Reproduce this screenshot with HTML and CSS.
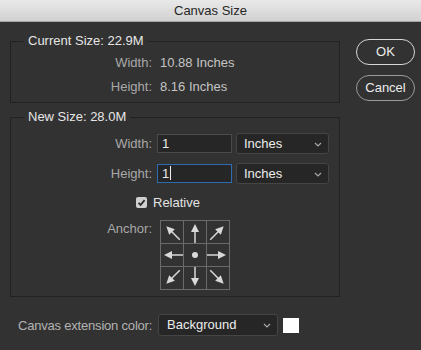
FILE: index.html
```html
<!DOCTYPE html>
<html lang="en">
<head>
    <meta charset="UTF-8">
    <title>Canvas Size</title>
    <link rel="stylesheet" href="styles.css">
</head>
<body>
<div id="dialog">
    <div class="titlebar">Canvas Size</div>
    <div class="content">
        <div class="main">
            <fieldset class="group current">
                <legend>Current Size: 22.9M</legend>
                <div class="info-row"><span class="label">Width:</span><span class="value">10.88 Inches</span></div>
                <div class="info-row"><span class="label">Height:</span><span class="value">8.16 Inches</span></div>
            </fieldset>

            <fieldset class="group new">
                <legend>New Size: 28.0M</legend>
                <div class="field-row">
                    <span class="label">Width:</span>
                    <div class="fields">
                        <div class="textbox">1</div>
                        <div class="select unit">Inches<svg class="chev" width="8" height="5" viewBox="0 0 8 5"><polyline points="1,1 4,4 7,1" fill="none" stroke="#a8a8a8" stroke-width="1.2"/></svg></div>
                    </div>
                </div>
                <div class="field-row">
                    <span class="label">Height:</span>
                    <div class="fields">
                        <div class="textbox focused">1<span class="caret"></span></div>
                        <div class="select unit">Inches<svg class="chev" width="8" height="5" viewBox="0 0 8 5"><polyline points="1,1 4,4 7,1" fill="none" stroke="#a8a8a8" stroke-width="1.2"/></svg></div>
                    </div>
                </div>
                <div class="check-row">
                    <span class="checkbox"><svg width="11" height="11" viewBox="0 0 11 11"><polyline points="2.5,5.8 4.6,7.9 8.6,3.2" fill="none" stroke="#2b2b2b" stroke-width="1.8"/></svg></span>
                    <span class="check-label">Relative</span>
                </div>
                <div class="anchor-row">
                    <span class="label">Anchor:</span>
                    <div class="anchor">
                        <div class="cell"><svg viewBox="0 0 22 22"><g transform="rotate(-45 11 11)"><line x1="11" y1="22" x2="11" y2="9"/><polygon points="11,3 7,11 15,11"/></g></svg></div>
                        <div class="cell"><svg viewBox="0 0 22 22"><line x1="11" y1="22" x2="11" y2="9"/><polygon points="11,3 7,11 15,11"/></svg></div>
                        <div class="cell"><svg viewBox="0 0 22 22"><g transform="rotate(45 11 11)"><line x1="11" y1="22" x2="11" y2="9"/><polygon points="11,3 7,11 15,11"/></g></svg></div>
                        <div class="cell"><svg viewBox="0 0 22 22"><g transform="rotate(-90 11 11)"><line x1="11" y1="22" x2="11" y2="9"/><polygon points="11,3 7,11 15,11"/></g></svg></div>
                        <div class="cell"><svg viewBox="0 0 22 22"><circle cx="11" cy="11" r="3"/></svg></div>
                        <div class="cell"><svg viewBox="0 0 22 22"><g transform="rotate(90 11 11)"><line x1="11" y1="22" x2="11" y2="9"/><polygon points="11,3 7,11 15,11"/></g></svg></div>
                        <div class="cell"><svg viewBox="0 0 22 22"><g transform="rotate(-135 11 11)"><line x1="11" y1="22" x2="11" y2="9"/><polygon points="11,3 7,11 15,11"/></g></svg></div>
                        <div class="cell"><svg viewBox="0 0 22 22"><g transform="rotate(180 11 11)"><line x1="11" y1="22" x2="11" y2="9"/><polygon points="11,3 7,11 15,11"/></g></svg></div>
                        <div class="cell"><svg viewBox="0 0 22 22"><g transform="rotate(135 11 11)"><line x1="11" y1="22" x2="11" y2="9"/><polygon points="11,3 7,11 15,11"/></g></svg></div>
                    </div>
                </div>
            </fieldset>

            <div class="ext-row">
                <span class="ext-label">Canvas extension color:</span>
                <div class="select ext">Background<svg class="chev" width="8" height="5" viewBox="0 0 8 5"><polyline points="1,1 4,4 7,1" fill="none" stroke="#a8a8a8" stroke-width="1.2"/></svg></div>
                <span class="swatch"></span>
            </div>
        </div>

        <div class="buttons">
            <div class="btn default">OK</div>
            <div class="btn">Cancel</div>
        </div>
    </div>
</div>
</body>
</html>
```

FILE: styles.css
```css
* {
    margin: 0;
    padding: 0;
    box-sizing: border-box;
}
html, body {
    height: 100%;
}
body {
    background-color: #323232;
    font-family: "Liberation Sans", Arial, sans-serif;
    font-size: 13px;
    color: #e4e4e4;
}
#dialog {
    width: 421px;
    height: 350px;
}
.titlebar {
    height: 22px;
    line-height: 21px;
    text-align: center;
    color: #262626;
    background: linear-gradient(#e9e9e9, #d1d1d1);
    border-bottom: 1px solid #a4a4a4;
}
.content {
    display: flex;
    padding-left: 10px;
}
.main {
    width: 330px;
    padding-top: 11px;
}

/* groups */
.group {
    border: 1px solid #222;
    min-width: 0;
}
.group legend {
    margin-left: 13px;
    padding: 0 4px;
    line-height: 16px;
    color: #e6e6e6;
}
.current {
    padding: 2px 0 3px;
}
.new {
    margin-top: 6px;
    padding: 7px 0 6px;
}
.label {
    text-align: right;
    color: #a9a9a9;
}
.info-row {
    display: grid;
    grid-template-columns: 141px auto;
    column-gap: 8px;
    line-height: 24px;
}
.info-row .value {
    color: #c4c4c4;
}

/* new size rows */
.field-row {
    display: grid;
    grid-template-columns: 141px auto;
    column-gap: 5px;
    align-items: center;
    height: 22px;
}
.field-row + .field-row {
    margin-top: 8px;
}
.fields {
    display: flex;
    align-items: center;
    gap: 4px;
}
.textbox {
    width: 75px;
    height: 19px;
    line-height: 17px;
    padding-left: 4px;
    background-color: #262626;
    border: 1px solid #4a4a4a;
    color: #ececec;
    display: flex;
    align-items: center;
}
.textbox.focused {
    border-color: #2d6cb0;
}
.caret {
    width: 1px;
    height: 14px;
    margin-left: 1px;
    background-color: #f0f0f0;
}
.select {
    position: relative;
    height: 21px;
    line-height: 19px;
    padding-left: 7px;
    background-color: #262626;
    border: 1px solid #454545;
    border-radius: 3px;
    color: #ececec;
}
.select .chev {
    position: absolute;
    right: 6px;
    top: 8px;
}
.unit {
    width: 93px;
}

.check-row {
    display: flex;
    align-items: center;
    gap: 6px;
    height: 16px;
    margin-top: 10px;
    padding-left: 125px;
}
.checkbox {
    width: 11px;
    height: 11px;
    border-radius: 2px;
    background-color: #cfcfcf;
    display: flex;
}
.check-label {
    color: #e4e4e4;
}

/* anchor */
.anchor-row {
    display: grid;
    grid-template-columns: 141px auto;
    column-gap: 8px;
    margin-top: 10px;
    line-height: 18px;
}
.anchor {
    display: grid;
    grid-template-columns: repeat(3, 22px);
    grid-template-rows: repeat(3, 22px);
    gap: 1px;
    padding: 1px;
    width: 70px;
    background-color: #6a6a6a;
}
.cell {
    background-color: #323232;
}
.cell svg {
    display: block;
    width: 22px;
    height: 22px;
    fill: #d9d9d9;
    stroke: #d9d9d9;
    stroke-width: 1.5;
}
.cell svg polygon, .cell svg circle {
    stroke: none;
}

/* bottom row */
.ext-row {
    display: flex;
    align-items: center;
    margin-top: 17px;
    padding-left: 8px;
    height: 22px;
}
.ext-label {
    width: 134px;
    margin-right: 6px;
    white-space: nowrap;
    letter-spacing: -0.2px;
    color: #b2b2b2;
}
.ext {
    width: 120px;
    height: 22px;
    line-height: 20px;
    padding-left: 8px;
}
.ext .chev {
    top: 8px;
}
.swatch {
    width: 16px;
    height: 15px;
    margin-left: 5px;
    background-color: #fff;
}

/* buttons */
.buttons {
    display: flex;
    flex-direction: column;
    gap: 10px;
    padding-top: 17px;
    margin-left: 16px;
}
.btn {
    width: 59px;
    height: 26px;
    line-height: 24px;
    text-align: center;
    border: 1px solid #9a9a9a;
    border-radius: 13px;
    color: #ececec;
}
.btn.default {
    border-color: #d6d6d6;
}
```
